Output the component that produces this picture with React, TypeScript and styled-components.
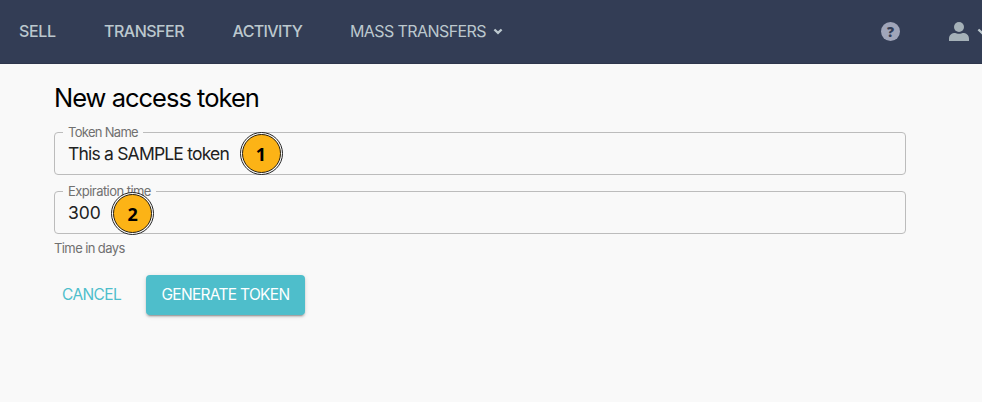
import React from "react";
import styled, { createGlobalStyle } from "styled-components";

const GlobalStyle = createGlobalStyle`
  *, *::before, *::after { box-sizing: border-box; }
  body {
    margin: 0;
    min-height: 100vh;
    background: #f9f9f9;
    font-family: Inter, "Liberation Sans", sans-serif;
    color: #000;
  }
`;

const Header = styled.header`
  display: flex;
  align-items: center;
  height: 64px;
  padding: 0 0 1px 19px;
  background: #333d55;
  border-bottom: 1px solid #2e364c;
  color: #bcc8ce;
  overflow: hidden;
`;

const Nav = styled.nav`
  display: flex;
  flex: 1;
  gap: 48px;
`;

const NavItem = styled.a<{ $weight: number; $spacing: number; $width: number }>`
  display: flex;
  align-items: center;
  flex: none;
  gap: 7px;
  width: ${(p) => p.$width}px;
  font-size: 16px;
  line-height: 20px;
  font-weight: ${(p) => p.$weight};
  letter-spacing: ${(p) => p.$spacing}px;
  white-space: nowrap;
  svg { flex: none; margin-top: 1px; }
`;

const Tools = styled.div`
  display: flex;
  align-items: center;
  flex: none;
  width: 101px;
  svg { flex: none; display: block; }
`;

const HelpBadge = styled.span`
  display: flex;
  align-items: center;
  justify-content: center;
  flex: none;
  width: 19px;
  height: 19px;
  margin-right: 49px;
  border-radius: 50%;
  background: #a0a5b9;
  color: #333d55;
  font: 800 14px/19px "Open Sans", sans-serif;
`;

const Account = styled.div`
  display: flex;
  align-items: center;
  flex: none;
  gap: 8px;
`;

const Main = styled.main`
  width: 852px;
  padding-top: 19px;
  margin-left: 54px;
`;

const Title = styled.h1`
  margin: 0;
  font-size: 25.5px;
  line-height: 30px;
  font-weight: 380;
  letter-spacing: -1px;
`;

const Field = styled.fieldset<{ $top: number }>`
  height: 50px;
  margin: ${(p) => p.$top}px 0 0;
  padding: 0 13px 0 8px;
  border: 1px solid #bcbcbc;
  border-radius: 4px;
  min-width: 0;
`;

const Legend = styled.legend<{ $width: number; $spacing: number }>`
  width: ${(p) => p.$width}px;
  height: 15px;
  padding: 0 0 0 5px;
  font-size: 13px;
  line-height: 15px;
  letter-spacing: ${(p) => p.$spacing}px;
  color: #707070;
  white-space: nowrap;
`;

const Value = styled.div<{ $spacing: number }>`
  display: flex;
  align-items: center;
  height: 26px;
  padding-left: 5px;
  gap: 11px;
  font-size: 17.5px;
  font-weight: 370;
  letter-spacing: ${(p) => p.$spacing}px;
  color: #212121;
  white-space: nowrap;
`;

const Anchor = styled.span`
  position: relative;
  width: 0;
  height: 0;
`;

const Marker = styled.span<{ $top: number }>`
  position: absolute;
  left: -0.5px;
  top: ${(p) => p.$top}px;
  display: flex;
  align-items: center;
  justify-content: center;
  width: 43px;
  height: 43px;
  border: 1.3px solid #222;
  border-radius: 50%;
  background: #fff;
`;

const MarkerDisc = styled.span`
  width: 39px;
  height: 39px;
  border: 1.5px solid #241c0c;
  border-radius: 50%;
  background: #fcb316;
  color: #000;
  font: 700 18px/39px "Open Sans", sans-serif;
  letter-spacing: 0;
  text-align: center;
  flex: none;
`;

const Hint = styled.p`
  margin: 6px 0 0;
  font-size: 13px;
  line-height: 16px;
  letter-spacing: -0.6px;
  color: #707070;
`;

const Actions = styled.div`
  display: flex;
  margin-top: 19px;
`;

const Button = styled.button<{ $primary?: boolean }>`
  height: 40px;
  width: ${(p) => (p.$primary ? 159 : 92)}px;
  padding: 0 0 1px ${(p) => (p.$primary ? 15.5 : 8)}px;
  border: 0;
  border-radius: 4px;
  background: ${(p) => (p.$primary ? "#4ebecb" : "transparent")};
  box-shadow: ${(p) =>
    p.$primary
      ? "0 3px 1px -2px rgba(0,0,0,.2), 0 2px 2px rgba(0,0,0,.14), 0 1px 5px rgba(0,0,0,.12)"
      : "none"};
  color: ${(p) => (p.$primary ? "#fff" : "#4ebecb")};
  font: 370 15.5px/20px Inter, sans-serif;
  letter-spacing: ${(p) => (p.$primary ? -0.7 : -0.62)}px;
  text-align: left;
  white-space: nowrap;
`;

const Chevron = () => (
  <svg width="10" height="7" viewBox="0 0 10 7" fill="none">
    <path d="M1.4 1.5 5 4.9 8.6 1.5" stroke="#bcc8ce" strokeWidth="2.3" />
  </svg>
);

const Person = () => (
  <svg width="20" height="19" viewBox="0 0 20 19" fill="#a5b1b8">
    <circle cx="10" cy="5" r="5" />
    <path d="M0 19v-2.2C0 13 2.8 11 6.3 11c1.4.9 6 .9 7.4 0 3.5 0 6.3 2 6.3 5.8V19Z" />
  </svg>
);

export default function App() {
  return (
    <>
      <GlobalStyle />
      <Header>
        <Nav>
          <NavItem $weight={480} $spacing={-0.35} $width={37}>SELL</NavItem>
          <NavItem $weight={480} $spacing={-0.5} $width={80.5}>TRANSFER</NavItem>
          <NavItem $weight={480} $spacing={-0.63} $width={69.5}>ACTIVITY</NavItem>
          <NavItem $weight={370} $spacing={-0.58} $width={153}>
            MASS TRANSFERS <Chevron />
          </NavItem>
        </Nav>
        <Tools>
          <HelpBadge>?</HelpBadge>
          <Account>
            <Person />
            <Chevron />
          </Account>
        </Tools>
      </Header>
      <Main>
        <Title>New access token</Title>
        <Field $top={12}>
          <Legend $width={80} $spacing={-0.7}>Token Name</Legend>
          <Value $spacing={-0.8}>
            <span>This a SAMPLE token</span>
            <Anchor><Marker $top={-21.5}><MarkerDisc>1</MarkerDisc></Marker></Anchor>
          </Value>
        </Field>
        <Field $top={9}>
          <Legend $width={93} $spacing={-0.55}>Expiration time</Legend>
          <Value $spacing={-0.1}>
            <span>300</span>
            <Anchor><Marker $top={-20.5}><MarkerDisc>2</MarkerDisc></Marker></Anchor>
          </Value>
        </Field>
        <Hint>Time in days</Hint>
        <Actions>
          <Button>CANCEL</Button>
          <Button $primary>GENERATE TOKEN</Button>
        </Actions>
      </Main>
    </>
  );
}
